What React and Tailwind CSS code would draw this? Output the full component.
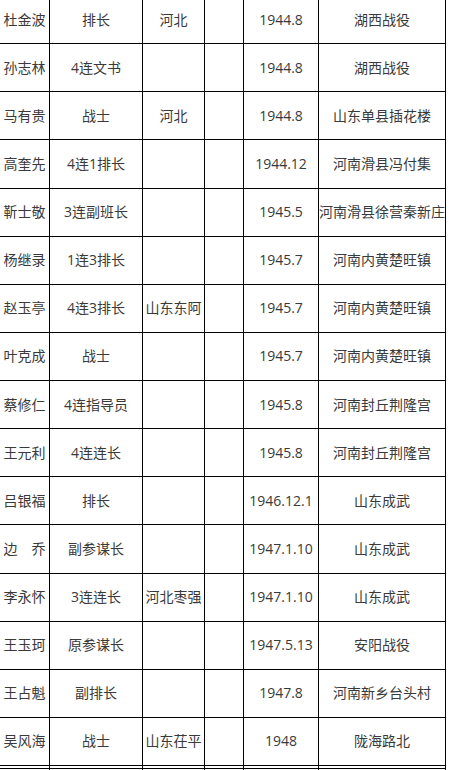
const rows = [
  ['杜金波', '排长', '河北', '', '1944.8', '湖西战役'],
  ['孙志林', '4连文书', '', '', '1944.8', '湖西战役'],
  ['马有贵', '战士', '河北', '', '1944.8', '山东单县插花楼'],
  ['高奎先', '4连1排长', '', '', '1944.12', '河南滑县冯付集'],
  ['靳士敬', '3连副班长', '', '', '1945.5', '河南滑县徐营秦新庄'],
  ['杨继录', '1连3排长', '', '', '1945.7', '河南内黄楚旺镇'],
  ['赵玉亭', '4连3排长', '山东东阿', '', '1945.7', '河南内黄楚旺镇'],
  ['叶克成', '战士', '', '', '1945.7', '河南内黄楚旺镇'],
  ['蔡修仁', '4连指导员', '', '', '1945.8', '河南封丘荆隆宫'],
  ['王元利', '4连连长', '', '', '1945.8', '河南封丘荆隆宫'],
  ['吕银福', '排长', '', '', '1946.12.1', '山东成武'],
  ['边　乔', '副参谋长', '', '', '1947.1.10', '山东成武'],
  ['李永怀', '3连连长', '河北枣强', '', '1947.1.10', '山东成武'],
  ['王玉珂', '原参谋长', '', '', '1947.5.13', '安阳战役'],
  ['王占魁', '副排长', '', '', '1947.8', '河南新乡台头村'],
  ['吴风海', '战士', '山东茌平', '', '1948', '陇海路北'],
]

const cell = 'border border-black p-0 text-center align-middle whitespace-nowrap overflow-hidden'

export default function App() {
  return (
    <div className="w-[449px] h-[770px] overflow-hidden bg-white">
      <table
        className="table-fixed border-collapse w-[446px] -ml-[1px] -mt-[5px] text-[14px] leading-none text-[#3a3a3a]"
        style={{ fontFamily: '"Open Sans", "Noto Sans CJK SC", sans-serif' }}
      >
        <colgroup>
          <col className="w-[50px]" />
          <col className="w-[93px]" />
          <col className="w-[62px]" />
          <col className="w-[39px]" />
          <col className="w-[75px]" />
          <col className="w-[127px]" />
        </colgroup>
        <tbody>
          {rows.map((r, i) => (
            <tr key={i} className="h-[48.13px]">
              {r.map((t, j) => (
                <td key={j} className={cell}>{t}</td>
              ))}
            </tr>
          ))}
          {/* double rule under the last row */}
          <tr className="h-[3px]">
            {[0, 1, 2, 3, 4, 5].map(j => <td key={j} className={cell}></td>)}
          </tr>
          <tr className="h-[40px]">
            {[0, 1, 2, 3, 4, 5].map(j => <td key={j} className={cell}></td>)}
          </tr>
        </tbody>
      </table>
    </div>
  )
}
